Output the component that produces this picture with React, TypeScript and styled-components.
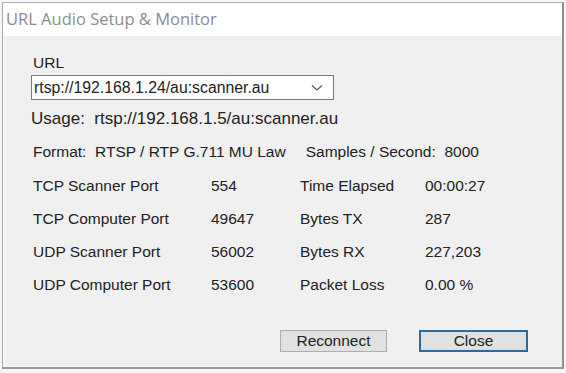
import styled, { createGlobalStyle } from "styled-components";

const GlobalStyle = createGlobalStyle`
  html, body {
    margin: 0;
    padding: 0;
    background: #f6f6f6;
  }
  body {
    font-family: "Liberation Sans", Arial, sans-serif;
    color: #222;
  }
`;

type Stat = { label: string; value: string; label2: string; value2: string };

const stats: Stat[] = [
  { label: "TCP Scanner Port", value: "554", label2: "Time Elapsed", value2: "00:00:27" },
  { label: "TCP Computer Port", value: "49647", label2: "Bytes TX", value2: "287" },
  { label: "UDP Scanner Port", value: "56002", label2: "Bytes RX", value2: "227,203" },
  { label: "UDP Computer Port", value: "53600", label2: "Packet Loss", value2: "0.00 %" },
];

const App = () => {
  return (
    <>
      <GlobalStyle />
      <Window>
        <TitleBar>URL Audio Setup &amp; Monitor</TitleBar>
        <Body>
          <Label>URL</Label>
          <Combo>
            <ComboText>rtsp://192.168.1.24/au:scanner.au</ComboText>
            <svg width="12" height="8" viewBox="0 0 12 8">
              <path d="M1 1.5 L6 6 L11 1.5" fill="none" stroke="#555" strokeWidth="1.2" />
            </svg>
          </Combo>
          <Usage>Usage:&nbsp; rtsp://192.168.1.5/au:scanner.au</Usage>
          <Format>
            <span>Format:&nbsp; RTSP / RTP G.711 MU Law</span>
            <span>Samples / Second:&nbsp; 8000</span>
          </Format>
          <StatGrid>
            {stats.map((s) => (
              <StatRow key={s.label}>
                <Cell>{s.label}</Cell>
                <Cell>{s.value}</Cell>
                <Cell>{s.label2}</Cell>
                <Cell>{s.value2}</Cell>
              </StatRow>
            ))}
          </StatGrid>
          <ButtonRow>
            <Button>Reconnect</Button>
            <Button $primary>Close</Button>
          </ButtonRow>
        </Body>
      </Window>
    </>
  );
};

export default App;

const Window = styled.div`
  margin: 2px 0 0 2px;
  width: 562px;
  height: 367px;
  box-sizing: border-box;
  border: 1px solid #a9a9a9;
  border-right: 2px solid #8e8e8e;
  border-bottom: 2px solid #9a9a9a;
  display: flex;
  flex-direction: column;
  background: #f0f0f0;
`;

const TitleBar = styled.div`
  height: 33px;
  background: #fff;
  color: #8c8c8c;
  font-family: "Open Sans", "Noto Sans", sans-serif;
  font-size: 16.5px;
  display: flex;
  align-items: center;
  padding-left: 3px;
  padding-bottom: 3px;
  box-sizing: border-box;
`;

const Body = styled.div`
  flex: 1;
  display: flex;
  flex-direction: column;
  padding: 19px 0 0 28px;
  font-size: 15.5px;
  box-shadow: inset 9px 0 0 -8px #fafafa, inset 0 -4px 0 -3px #fafafa;
`;

const Label = styled.div`
  line-height: 16px;
  padding-left: 2px;
`;

const Combo = styled.div`
  margin-top: 4px;
  width: 303px;
  height: 25px;
  box-sizing: border-box;
  border: 1px solid #7a7a7a;
  background: #fff;
  display: flex;
  align-items: center;
  justify-content: space-between;
  padding: 0 10px 0 2px;
`;

const ComboText = styled.span`
  font-size: 15.8px;
`;

const Usage = styled.div`
  margin-top: 11px;
  line-height: 16px;
  font-size: 17px;
`;

const Format = styled.div`
  margin-top: 17px;
  line-height: 16px;
  padding-left: 2px;
  display: flex;
  gap: 20px;
`;

const StatGrid = styled.div`
  margin-top: 9px;
  padding-left: 2px;
  display: flex;
  flex-direction: column;
`;

const StatRow = styled.div`
  display: grid;
  grid-template-columns: 178px 89px 125px auto;
  height: 33px;
  align-items: center;
`;

const Cell = styled.div`
  white-space: nowrap;
`;

const ButtonRow = styled.div`
  margin-top: 29px;
  display: flex;
  justify-content: flex-end;
  gap: 32px;
  padding-right: 34px;
`;

const Button = styled.button<{ $primary?: boolean }>`
  width: ${(p) => (p.$primary ? "109px" : "107px")};
  height: 22px;
  box-sizing: border-box;
  font-family: "Liberation Sans", Arial, sans-serif;
  font-size: 15.5px;
  line-height: 1;
  color: #222;
  background: #e1e1e1;
  padding: 0;
  border: ${(p) => (p.$primary ? "2px solid #2d6b9c" : "1px solid #adadad")};
  box-shadow: ${(p) => (p.$primary ? "inset 0 0 0 1px #cde3f3" : "none")};
`;
